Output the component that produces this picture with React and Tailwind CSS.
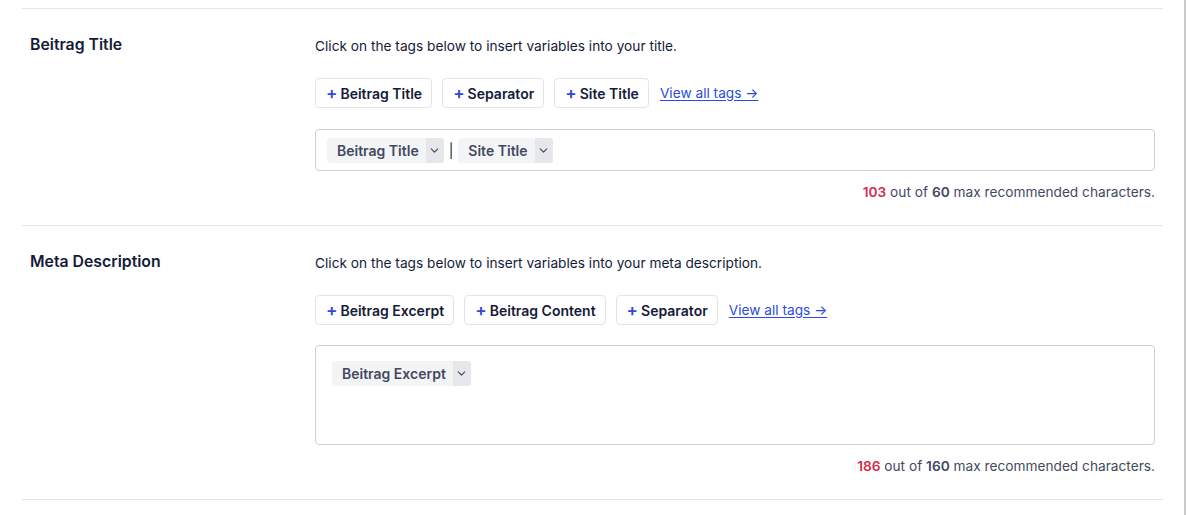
import { ChevronDown } from "lucide-react";

const sections = [
  {
    label: "Beitrag Title",
    hint: "Click on the tags below to insert variables into your title.",
    buttons: ["Beitrag Title", "Separator", "Site Title"],
    multiline: false,
    count: 103,
    max: 60,
  },
  {
    label: "Meta Description",
    hint: "Click on the tags below to insert variables into your meta description.",
    buttons: ["Beitrag Excerpt", "Beitrag Content", "Separator"],
    multiline: true,
    count: 186,
    max: 160,
  },
];

function TagChip({ label }) {
  return (
    <span className="inline-flex h-[25px] items-stretch overflow-hidden rounded-[3px] text-[14px] font-semibold text-[#434960]">
      <span className="flex items-center bg-[#f3f4f6] pl-[10px] pr-[7px]">{label}</span>
      <span className="flex w-[18px] items-center justify-center bg-[#e5e7eb]">
        <ChevronDown className="h-[13px] w-[13px] text-[#434960]" strokeWidth={2.2} />
      </span>
    </span>
  );
}

function InsertButton({ label }) {
  return (
    <button
      className="flex h-[30px] items-center gap-[3px] rounded-[4px] border border-[#e2e4e9] bg-white pl-[10px] pr-[9px] text-[14px] font-semibold text-[#141b38]"
      type="button"
    >
      <span className="text-[17px] font-semibold leading-none text-[#3048dc]">+</span>
      {label}
    </button>
  );
}

function SettingRow({ section }) {
  return (
    <div className="flex border-b border-[#e5e5e5] pb-[23px] pt-[27px]">
      <div className="w-[293px] shrink-0 pl-[8px]">
        <h3 className="text-[15.8px] font-semibold leading-[18px] text-[#141b38]">{section.label}</h3>
      </div>
      <div className="flex-1 pr-[8px]">
        <p className="text-[13.7px] leading-[20px] text-[#141b38]">{section.hint}</p>
        <div className="mt-[22px] flex items-center gap-[10px]">
          {section.buttons.map((b) => (
            <InsertButton key={b} label={b} />
          ))}
          <a className="ml-[1px] text-[13.7px] text-[#2c4be0] underline underline-offset-2" href="#">
            View all tags →
          </a>
        </div>
        {section.multiline ? (
          <div className="mt-[20px] h-[100px] rounded-[4px] border border-[#d0d1d7] px-[16px] pt-[15px]">
            <TagChip label="Beitrag Excerpt" />
          </div>
        ) : (
          <div className="mt-[21px] flex h-[42px] items-center gap-[5px] rounded-[4px] border border-[#d0d1d7] px-[11px]">
            <TagChip label="Beitrag Title" />
            <span className="text-[14px] font-normal text-[#141b38]">|</span>
            <TagChip label="Site Title" />
          </div>
        )}
        <p className="mt-[11px] text-right text-[13.7px] leading-[20px] text-[#434960]">
          <span className="font-semibold text-[#d72c4d]">{section.count}</span> out of{" "}
          <span className="font-semibold">{section.max}</span> max recommended characters.
        </p>
      </div>
    </div>
  );
}

export default function App() {
  return (
    <div className="flex h-[515px] w-[1186px] bg-white" style={{ fontFamily: "Inter, 'Noto Sans', sans-serif" }}>
      <div className="w-[1184px] pl-[22px] pr-[21px] pt-[8px]">
        <div className="border-t border-[#e5e5e5]">
          {sections.map((s) => (
            <SettingRow key={s.label} section={s} />
          ))}
        </div>
      </div>
      <div className="w-[2px] bg-[#c9c9c9]" />
    </div>
  );
}
